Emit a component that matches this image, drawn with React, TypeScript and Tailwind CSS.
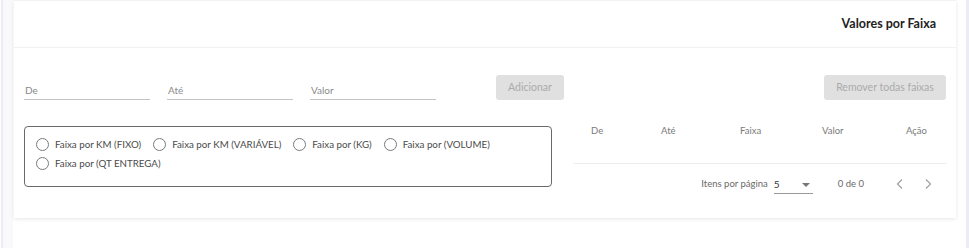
import React from "react";

const font = { fontFamily: "Lato, 'Noto Sans', sans-serif" };

function Field({ label }: { label: string }) {
  return (
    <div className="w-[126px] h-[25px] flex items-end border-b border-[#c4c4c4]">
      <span className="text-[10px] text-[#8a8a8a] leading-none pb-[4px] pl-[1px]">{label}</span>
    </div>
  );
}

function Radio({ label }: { label: string }) {
  return (
    <div className="flex items-center h-[19px] mr-[12px]">
      <span className="w-[13px] h-[13px] rounded-full border border-[#7a7a7a] mr-[6px]" />
      <span className="text-[9.75px] text-[#4a4a4a] leading-none">{label}</span>
    </div>
  );
}

export default function App() {
  return (
    <div style={font} className="w-[969px] h-[248px] bg-white flex">
      <div className="w-[2px] ml-[1px] bg-[#ececf5]" />
      <div className="w-[10px] bg-[#f9f9fb]" />
      <div className="flex-1 pl-[1px] pr-[9px]">
        <div className="w-[942px] h-[218px] bg-white border-t border-[#f2f2f2] shadow-[0_1px_4px_rgba(0,0,0,0.10)]">
          <div className="h-[47px] border-b border-[#f1f1f1] flex items-center justify-end pr-[20px]">
            <span className="text-[12.5px] font-bold text-[#222]">Valores por Faixa</span>
          </div>
          <div className="px-[10px] pt-[27px] flex items-end">
            <div className="flex gap-[17px]">
              <Field label="De" />
              <Field label="Até" />
              <Field label="Valor" />
            </div>
            <button className="ml-[60px] w-[68px] h-[25px] rounded-[3px] bg-[#e0e0e0] text-[10.5px] text-[#ababab]">
              Adicionar
            </button>
            <button className="ml-auto w-[122px] h-[25px] rounded-[3px] bg-[#e0e0e0] text-[10.5px] text-[#ababab]">
              Remover todas faixas
            </button>
          </div>
          <div className="px-[10px] pt-[20px] flex items-start">
            <div className="mt-[6px] w-[528px] h-[61px] border border-[#6a6a6a] rounded-[4px] pl-[11px] pt-[8px] flex flex-wrap content-start">
              <Radio label="Faixa por KM (FIXO)" />
              <Radio label="Faixa por KM (VARIÁVEL)" />
              <Radio label="Faixa por (KG)" />
              <Radio label="Faixa por (VOLUME)" />
              <Radio label="Faixa por (QT ENTREGA)" />
            </div>
            <div className="ml-[22px] flex-1">
              <div className="h-[44px] border-b border-[#ececec]">
                <div className="h-[22px] grid grid-cols-[70px_79px_82px_84px_1fr] pl-[17px] items-center text-[9.5px] text-[#7a7a7a]">
                  <span>De</span>
                  <span>Até</span>
                  <span>Faixa</span>
                  <span>Valor</span>
                  <span>Ação</span>
                </div>
              </div>
              <div className="h-[40px] flex items-center justify-end pr-[6px] text-[9.5px] text-[#6a6a6a]">
                <span>Itens por página</span>
                <div className="ml-[6px] w-[39px] h-[19px] border-b border-[#9a9a9a] flex items-center justify-between pt-[2px]">
                  <span className="text-[#333] text-[10px]">5</span>
                  <span className="w-0 h-0 border-l-[4px] border-r-[4px] border-t-[4px] border-l-transparent border-r-transparent border-t-[#777] mr-[3px]" />
                </div>
                <span className="ml-[25px]">0 de 0</span>
                <div className="ml-[24px] flex gap-[4px]">
                  <svg width="24" height="24" viewBox="0 0 24 24" className="block">
                    <path d="M14 7.5l-4.5 4.5 4.5 4.5" fill="none" stroke="#a0a0a0" strokeWidth="1.2" />
                  </svg>
                  <svg width="24" height="24" viewBox="0 0 24 24" className="block">
                    <path d="M10 7.5l4.5 4.5-4.5 4.5" fill="none" stroke="#a0a0a0" strokeWidth="1.2" />
                  </svg>
                </div>
              </div>
            </div>
          </div>
        </div>
      </div>
      <div className="w-[3px] bg-[#ececf5]" />
    </div>
  );
}
